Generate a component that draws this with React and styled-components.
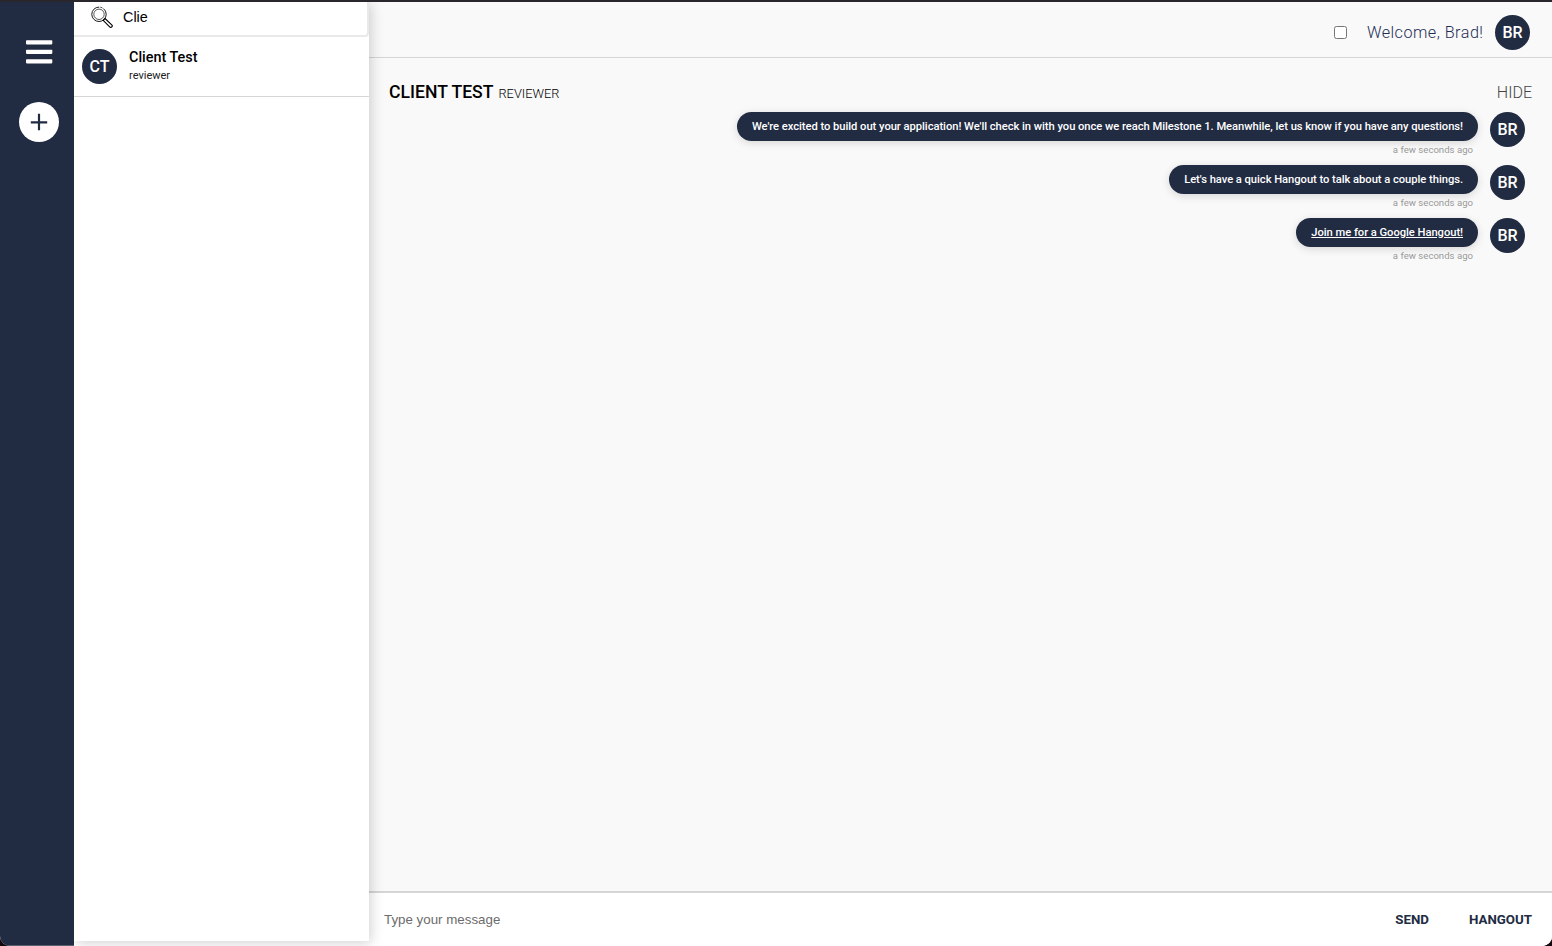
import React from 'react';
import styled, { createGlobalStyle } from 'styled-components';

const navy = '#212b42';

const GlobalStyle = createGlobalStyle`
  * { box-sizing: border-box; }
  body { margin: 0; background: #15080f; font-family: Roboto, sans-serif; color: #000; }
`;

const Frame = styled.div`
  display: flex;
  width: 100%;
  height: 946px;
  border-top: 2px solid #29272c;
  border-radius: 0 0 10px 10px;
  overflow: hidden;
  background: #fff;
`;

const Rail = styled.nav`
  display: flex;
  flex-direction: column;
  align-items: center;
  width: 74px;
  flex: none;
  padding: 38px 0 0 4px;
  background: ${navy};
  border-bottom: 1px solid #59606f;
`;

const MenuIcon = styled.svg`
  display: block;
  width: 28px;
  height: 24px;
  fill: #fff;
`;

const AddButton = styled.button`
  display: grid;
  place-items: center;
  width: 40px;
  height: 40px;
  margin-top: 38px;
  padding: 0;
  border: 0;
  border-radius: 50%;
  background: #fff;
`;

const Contacts = styled.aside`
  position: relative;
  z-index: 1;
  flex: none;
  width: 295px;
  height: 939px;
  background: #fff;
  box-shadow: 2px 2px 12px rgba(0, 0, 0, 0.18);
  clip-path: inset(0 -20px -10px 0);
`;

const Search = styled.label`
  display: flex;
  align-items: center;
  width: 295px;
  height: 35px;
  padding: 0 0 3px 17px;
  border-right: 2px solid #e9e9e9;
  border-bottom: 2px solid #e9e9e9;
  border-radius: 0 0 4px 0;
`;

const SearchIcon = styled.svg`
  flex: none;
`;

const SearchInput = styled.input`
  width: 220px;
  margin-left: 10px;
  padding: 0;
  border: 0;
  outline: 0;
  background: none;
  font: 14.4px/18px 'Liberation Sans', sans-serif;
  color: #000;
`;

const Contact = styled.div`
  display: flex;
  align-items: flex-start;
  height: 60px;
  padding: 12px 0 0 8px;
  border-bottom: 1px solid #d5d5d5;
`;

const Avatar = styled.span`
  flex: none;
  width: 35px;
  height: 35px;
  border-radius: 50%;
  background: ${navy};
  color: #fff;
  text-align: center;
  font-size: 16px;
  line-height: 35px;
  font-weight: 500;
`;

const ContactText = styled.div`
  margin-left: 12px;
`;

const ContactName = styled.div`
  font-size: 14.4px;
  line-height: 17px;
  font-weight: 500;
`;

const ContactRole = styled.div`
  margin-top: 3px;
  font-size: 11px;
  line-height: 13px;
  color: #222;
`;

const Main = styled.main`
  display: flex;
  flex-direction: column;
  flex: 1;
  min-width: 0;
  background: #f9f9f9;
`;

const Header = styled.header`
  display: flex;
  align-items: center;
  justify-content: flex-end;
  height: 56px;
  padding: 5px 22px 0 0;
  border-bottom: 1px solid #d5d5d5;
`;

const Checkbox = styled.input`
  appearance: none;
  width: 13px;
  height: 13px;
  margin: 0 20px 0 0;
  border: 1px solid #767676;
  border-radius: 2.5px;
  background: #fff;
`;

const Welcome = styled.span`
  margin-right: 11.5px;
  font-size: 16.2px;
  font-weight: 300;
  letter-spacing: 0.48px;
  color: #1f2f57;
`;

const Conversation = styled.section`
  flex: 1;
  padding: 23px 20px 0;
`;

const TitleRow = styled.div`
  display: flex;
  align-items: baseline;
  height: 31px;
  line-height: 22px;
`;

const Title = styled.h1`
  margin: 0;
  font-size: 17.6px;
  font-weight: 500;
`;

const Role = styled.span`
  margin-left: 5px;
  font-size: 12.8px;
  font-weight: 300;
`;

const Hide = styled.span`
  margin-left: auto;
  font-size: 16px;
  font-weight: 300;
  color: #444;
`;

const MessageRow = styled.div`
  display: flex;
  justify-content: flex-end;
  gap: 12px;
  height: 53px;
  padding-right: 7px;
`;

const MessageBody = styled.div`
  display: flex;
  flex-direction: column;
  align-items: flex-end;
`;

const Bubble = styled.div`
  height: 29px;
  padding: 0 15px;
  border-radius: 15px;
  background: ${navy};
  box-shadow: 0 2px 8px rgba(0, 0, 0, 0.14);
  color: #fff;
  font-size: 11.2px;
  letter-spacing: -0.04px;
  line-height: 29px;
  font-weight: 500;
  white-space: nowrap;
  text-decoration: ${(p) => (p.$link ? 'underline' : 'none')};
`;

const Time = styled.time`
  margin: 3px 5px 0 0;
  color: #999;
  font-size: 9.6px;
  line-height: 12px;
`;

const Composer = styled.footer`
  display: flex;
  align-items: center;
  height: 55px;
  padding: 1px 20px 0 15px;
  border-top: 2px solid #d5d5d5;
  background: #fff;
`;

const MessageInput = styled.input`
  flex: 1;
  padding: 0;
  border: 0;
  outline: 0;
  background: none;
  font: 13.33px/18px 'Liberation Sans', sans-serif;
  &::placeholder { color: #6c6c6c; opacity: 1; }
`;

const Action = styled.button`
  margin-left: 40px;
  padding: 0;
  border: 0;
  background: none;
  color: ${navy};
  font: 700 13.3px/16px Roboto, sans-serif;
`;

const messages = [
  { text: "We're excited to build out your application! We'll check in with you once we reach Milestone 1. Meanwhile, let us know if you have any questions!" },
  { text: "Let's have a quick Hangout to talk about a couple things." },
  { text: 'Join me for a Google Hangout!', link: true },
];

function SearchGlass() {
  return (
    <SearchIcon width="22" height="22" viewBox="0 0 22 22" fill="none" stroke="#000">
      <circle cx="8" cy="8.3" r="7.2" strokeWidth=".9" strokeDasharray="34 1.2 2 1.2 7" />
      <circle cx="8" cy="8.3" r="5.2" strokeWidth=".65" />
      <path d="M12.2 14.3l1.8-1.8 7 6.6c1 1.2-1 3-2.1 2z" strokeWidth="1.1" strokeLinejoin="round" />
    </SearchIcon>
  );
}

export default function App() {
  return (
    <>
      <GlobalStyle />
      <Frame>
        <Rail>
          <MenuIcon viewBox="0 0 28 24">
            <rect x="1" y=".2" width="26.3" height="4.2" rx=".8" />
            <rect x="1" y="9.7" width="26.3" height="4.2" rx=".8" />
            <rect x="1" y="19.2" width="26.3" height="4.2" rx=".8" />
          </MenuIcon>
          <AddButton aria-label="Add">
            <svg width="18" height="18" viewBox="0 0 18 18" stroke={navy} strokeWidth="2.2">
              <path d="M9 .8v16.4M.8 9.3h16.4" />
            </svg>
          </AddButton>
        </Rail>
        <Contacts>
          <Search>
            <SearchGlass />
            <SearchInput defaultValue="Clie" />
          </Search>
          <Contact>
            <Avatar>CT</Avatar>
            <ContactText>
              <ContactName>Client Test</ContactName>
              <ContactRole>reviewer</ContactRole>
            </ContactText>
          </Contact>
        </Contacts>
        <Main>
          <Header>
            <Checkbox type="checkbox" />
            <Welcome>Welcome, Brad!</Welcome>
            <Avatar>BR</Avatar>
          </Header>
          <Conversation>
            <TitleRow>
              <Title>CLIENT TEST</Title>
              <Role>REVIEWER</Role>
              <Hide>HIDE</Hide>
            </TitleRow>
            {messages.map((m) => (
              <MessageRow key={m.text}>
                <MessageBody>
                  <Bubble $link={m.link}>{m.text}</Bubble>
                  <Time>a few seconds ago</Time>
                </MessageBody>
                <Avatar>BR</Avatar>
              </MessageRow>
            ))}
          </Conversation>
          <Composer>
            <MessageInput placeholder="Type your message" />
            <Action>SEND</Action>
            <Action>HANGOUT</Action>
          </Composer>
        </Main>
      </Frame>
    </>
  );
}
